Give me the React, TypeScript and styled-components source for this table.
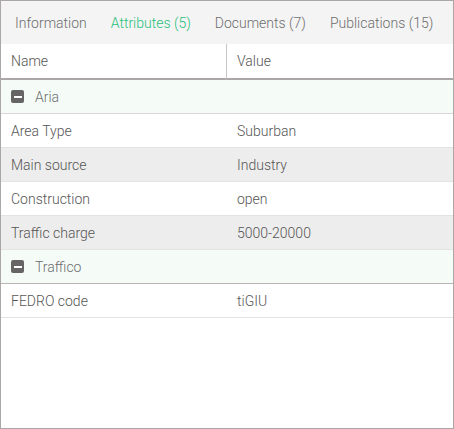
import React from "react";
import styled, { createGlobalStyle } from "styled-components";

const Global = createGlobalStyle`
  html, body { margin: 0; padding: 0; background: #fff; }
  * { box-sizing: border-box; }
  body { font-family: Roboto, "Noto Sans", sans-serif; font-weight: 300; }
`;

const Panel = styled.div`
  width: 454px;
  height: 429px;
  border: 1px solid #aba7a7;
  background: #fff;
  display: flex;
  flex-direction: column;
`;

const TabBar = styled.div`
  height: 43px;
  background: #f4f4f4;
  display: flex;
  align-items: center;
  padding-left: 2px;
`;

const Tab = styled.div<{ $active?: boolean }>`
  padding: 0 12px;
  font-size: 14px;
  line-height: 44px;
  color: ${(p) => (p.$active ? "#1fc07a" : "#6e6e6e")};
  white-space: nowrap;
`;

const Grid = styled.div`
  display: grid;
  grid-template-columns: 225px 1fr;
`;

const HeaderCell = styled.div<{ $divider?: boolean }>`
  height: 36px;
  border-bottom: 2px solid #aba7a7;
  border-left: ${(p) => (p.$divider ? "1px solid #c9c5c5" : "none")};
  padding-left: 10px;
  font-size: 14px;
  color: #555;
  display: flex;
  align-items: center;
`;

const Cell = styled.div<{ $shade?: boolean; $value?: boolean }>`
  height: 34px;
  border-bottom: 1px solid #e4e2e2;
  background: ${(p) => (p.$shade ? "#eeeded" : "#fff")};
  padding-left: ${(p) => (p.$value ? "11px" : "10px")};
  font-size: 14px;
  color: #555;
  display: flex;
  align-items: center;
`;

const GroupRow = styled.div<{ $strong?: boolean }>`
  grid-column: 1 / -1;
  height: 34px;
  background: #f5fcf8;
  border-bottom: 1px solid ${(p) => (p.$strong ? "#b8b5b5" : "#d9d7d7")};
  padding-left: 10px;
  display: flex;
  align-items: center;
  gap: 11px;
  font-size: 14px;
  color: #6e6e6e;
`;

const Collapse = styled.span`
  width: 13px;
  height: 13px;
  border-radius: 2px;
  background: #666464;
  display: inline-flex;
  align-items: center;
  justify-content: center;
  &::after {
    content: "";
    width: 8px;
    height: 2px;
    background: #fff;
  }
`;

type Row = { name: string; value: string };
const groups: { title: string; rows: Row[]; strong?: boolean }[] = [
  {
    title: "Aria",
    rows: [
      { name: "Area Type", value: "Suburban" },
      { name: "Main source", value: "Industry" },
      { name: "Construction", value: "open" },
      { name: "Traffic charge", value: "5000-20000" },
    ],
  },
  {
    title: "Traffico",
    strong: true,
    rows: [{ name: "FEDRO code", value: "tiGIU" }],
  },
];

export default function App() {
  return (
    <>
      <Global />
      <Panel>
        <TabBar>
          <Tab>Information</Tab>
          <Tab $active>Attributes (5)</Tab>
          <Tab>Documents (7)</Tab>
          <Tab>Publications (15)</Tab>
        </TabBar>
        <Grid>
          <HeaderCell>Name</HeaderCell>
          <HeaderCell $divider>Value</HeaderCell>
          {groups.map((g) => (
            <React.Fragment key={g.title}>
              <GroupRow $strong={g.strong}>
                <Collapse />
                {g.title}
              </GroupRow>
              {g.rows.map((r, i) => (
                <React.Fragment key={r.name}>
                  <Cell $shade={i % 2 === 1}>{r.name}</Cell>
                  <Cell $shade={i % 2 === 1} $value>
                    {r.value}
                  </Cell>
                </React.Fragment>
              ))}
            </React.Fragment>
          ))}
        </Grid>
      </Panel>
    </>
  );
}
